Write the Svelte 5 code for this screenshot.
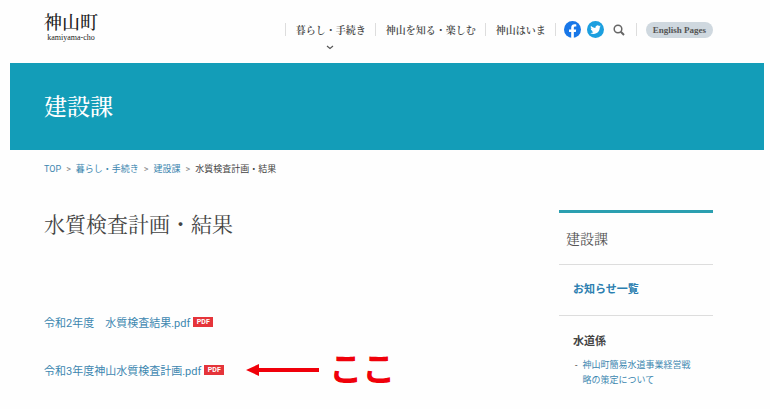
<script>
    const navItems = [
        { label: '暮らし・手続き', open: true },
        { label: '神山を知る・楽しむ', open: false },
        { label: '神山はいま', open: false }
    ];

    const crumbs = ['TOP', '暮らし・手続き', '建設課'];

    const files = [
        { name: '令和2年度　水質検査結果.pdf', marked: false },
        { name: '令和3年度神山水質検査計画.pdf', marked: true }
    ];
</script>

<header class="site-header">
    <a class="logo" href="#top">
        <span class="logo-name">神山町</span>
        <span class="logo-sub">kamiyama-cho</span>
    </a>

    <div class="header-menu">
        <nav class="nav">
            {#each navItems as item (item.label)}
                <a class="nav-item" href="#nav">
                    {item.label}
                    {#if item.open}
                        <svg class="chevron" width="8" height="5" viewBox="0 0 8 5" fill="none" stroke="#555">
                            <path d="M1 1l3 2.4L7 1" stroke-width="1.2"></path>
                        </svg>
                    {/if}
                </a>
            {/each}
        </nav>

        <div class="tools">
            <a href="#facebook" aria-label="Facebook">
                <svg width="17" height="17" viewBox="0 0 24 24">
                    <circle cx="12" cy="12" r="12" fill="#1877e8"></circle>
                    <path fill="#fff" d="M16.7 15.5l.5-3.5h-3.3V9.8c0-.95.47-1.9 1.96-1.9h1.51V5s-1.37-.24-2.69-.24c-2.74 0-4.53 1.66-4.53 4.67V12H7.1v3.5h3.05v8.35a12 12 0 0 0 3.75 0V15.5z"></path>
                </svg>
            </a>
            <a href="#twitter" aria-label="Twitter">
                <svg width="17" height="17" viewBox="0 0 24 24">
                    <circle cx="12" cy="12" r="12" fill="#1c9fdf"></circle>
                    <path fill="#fff" transform="translate(4.6 4.8) scale(.62)" d="M23.95 4.57a10 10 0 0 1-2.82.78 4.96 4.96 0 0 0 2.16-2.73c-.95.56-2 .96-3.13 1.19a4.92 4.92 0 0 0-8.38 4.48C7.69 8.1 4.07 6.13 1.64 3.16a4.92 4.92 0 0 0 1.52 6.57 4.9 4.9 0 0 1-2.23-.61v.06a4.92 4.92 0 0 0 3.95 4.83 5 5 0 0 1-2.21.08 4.94 4.94 0 0 0 4.6 3.42A9.87 9.87 0 0 1 0 19.54a13.99 13.99 0 0 0 7.55 2.21c9.05 0 14-7.5 14-13.98 0-.21 0-.42-.02-.63a9.94 9.94 0 0 0 2.42-2.57z"></path>
                </svg>
            </a>
            <button class="search" type="button" aria-label="検索">
                <svg width="12" height="12" viewBox="0 0 12 12" fill="none" stroke="#666">
                    <circle cx="5" cy="5" r="3.8" stroke-width="1.5"></circle>
                    <path d="M7.8 7.8l3.2 3.2" stroke-width="2"></path>
                </svg>
            </button>
        </div>

        <div class="lang">
            <a class="english" href="#english">English Pages</a>
        </div>
    </div>
</header>

<div class="hero">建設課</div>

<div class="page">
    <nav class="breadcrumb">
        {#each crumbs as crumb (crumb)}
            <a href="#crumb">{crumb}</a><span class="sep">&gt;</span>
        {/each}
        <span>水質検査計画・結果</span>
    </nav>

    <div class="columns">
        <main>
            <h1>水質検査計画・結果</h1>

            <ul class="files">
                {#each files as file (file.name)}
                    <li>
                        <a href="#pdf">{file.name}<span class="badge">PDF</span></a>
                        {#if file.marked}
                            <svg class="arrow" width="73" height="14" viewBox="0 0 73 14" fill="#f0000a">
                                <path d="M0 7L13 1v4h60v4H13v4z"></path>
                            </svg>
                            <strong class="here">ここ</strong>
                        {/if}
                    </li>
                {/each}
            </ul>
        </main>

        <aside class="sidebar">
            <h2>建設課</h2>
            <a class="news" href="#news">お知らせ一覧</a>
            <h3>水道係</h3>
            <ul>
                <li><a href="#plan">神山町簡易水道事業経営戦略の策定について</a></li>
            </ul>
        </aside>
    </div>
</div>

<style>
    :global(body) {
        margin: 0;
        background: #fefefe;
        color: #444;
        font-family: Roboto, 'Noto Sans CJK JP', sans-serif;
    }

    a {
        color: #3d87b0;
        text-decoration: none;
    }

    ul {
        list-style: none;
        margin: 0;
        padding: 0;
    }

    .site-header {
        display: flex;
        justify-content: space-between;
        height: 63px;
        padding: 0 57px 0 44px;
    }

    .logo {
        display: flex;
        flex-direction: column;
        align-items: center;
        padding-top: 14px;
        color: #222;
        font-family: 'Liberation Serif', 'Noto Serif CJK JP', 'Noto Sans CJK JP', serif;
    }

    .logo-name {
        font-size: 18px;
        font-weight: 500;
        line-height: 19px;
    }

    .logo-sub {
        font-size: 8px;
        line-height: 9px;
    }

    .header-menu {
        display: flex;
        align-items: center;
        height: 17px;
        padding-top: 21px;
    }

    .nav {
        display: flex;
    }

    .nav-item {
        position: relative;
        padding: 0 9px 0 10px;
        border-left: 1px solid #ddd;
        color: #444;
        font-family: 'Noto Serif CJK JP', 'Noto Sans CJK JP', serif;
        font-size: 10px;
        font-weight: 600;
        line-height: 13px;
    }

    .chevron {
        position: absolute;
        left: 50%;
        top: 22px;
        margin-left: -4px;
    }

    .tools {
        display: flex;
        align-items: center;
        gap: 6px;
        padding: 0 11px 0 8px;
        border-left: 1px solid #ddd;
        height: 13px;
    }

    .tools a,
    .search {
        display: flex;
    }

    .search {
        margin-left: 3px;
        padding: 0;
        border: 0;
        background: none;
        cursor: pointer;
    }

    .lang {
        display: flex;
        align-items: center;
        height: 13px;
        padding-left: 9px;
        border-left: 1px solid #ddd;
    }

    .english {
        padding: 0 7px;
        border-radius: 8px;
        background: #cfd8df;
        color: #555;
        font-family: 'Liberation Serif', serif;
        font-size: 9px;
        font-weight: bold;
        line-height: 16px;
        white-space: nowrap;
    }

    .hero {
        margin: 0 6px 0 10px;
        padding: 27px 34px 28px;
        background: #139db8;
        color: #fff;
        font-family: 'Noto Serif CJK JP', 'Noto Sans CJK JP', serif;
        font-size: 23px;
        font-weight: 500;
        line-height: 32px;
    }

    .page {
        padding: 12px 57px 0 44px;
    }

    .breadcrumb {
        display: flex;
        gap: 5px;
        font-size: 9px;
        line-height: 14px;
    }

    .sep {
        color: #888;
    }

    .columns {
        display: grid;
        grid-template-columns: 1fr 154px;
        padding-top: 34px;
    }

    h1 {
        margin: 0;
        color: #444;
        font-family: 'Noto Serif CJK JP', 'Noto Sans CJK JP', serif;
        font-size: 21px;
        font-weight: normal;
        line-height: 26px;
    }

    .files {
        padding-top: 62px;
    }

    .files li {
        display: flex;
        align-items: center;
        height: 48px;
        font-size: 11px;
    }

    .files a {
        display: flex;
        align-items: center;
        gap: 3px;
    }

    .badge {
        width: 20px;
        background: #e5343a;
        color: #fff;
        font-size: 7px;
        font-weight: bold;
        line-height: 10px;
        text-align: center;
    }

    .arrow {
        margin: 0 10px 0 22px;
    }

    .here {
        color: #f0000a;
        font-size: 33px;
        line-height: 40px;
    }

    .sidebar {
        border-top: 3px solid #2b9fb0;
    }

    h2 {
        margin: 0;
        padding: 15px 7px;
        border-bottom: 1px solid #ddd;
        color: #555;
        font-family: 'Noto Serif CJK JP', 'Noto Sans CJK JP', serif;
        font-size: 14px;
        font-weight: normal;
        line-height: 21px;
    }

    .news {
        display: block;
        padding: 17px 14px;
        border-bottom: 1px solid #ddd;
        color: #2b7eb0;
        font-size: 11px;
        font-weight: bold;
        line-height: 16px;
    }

    h3 {
        margin: 0;
        padding: 18px 14px 8px;
        font-size: 11px;
        line-height: 16px;
    }

    .sidebar li {
        display: flex;
        gap: 5px;
        padding: 0 20px 0 16px;
        font-size: 9px;
        line-height: 15px;
    }

    .sidebar li::before {
        content: '-';
    }
</style>
